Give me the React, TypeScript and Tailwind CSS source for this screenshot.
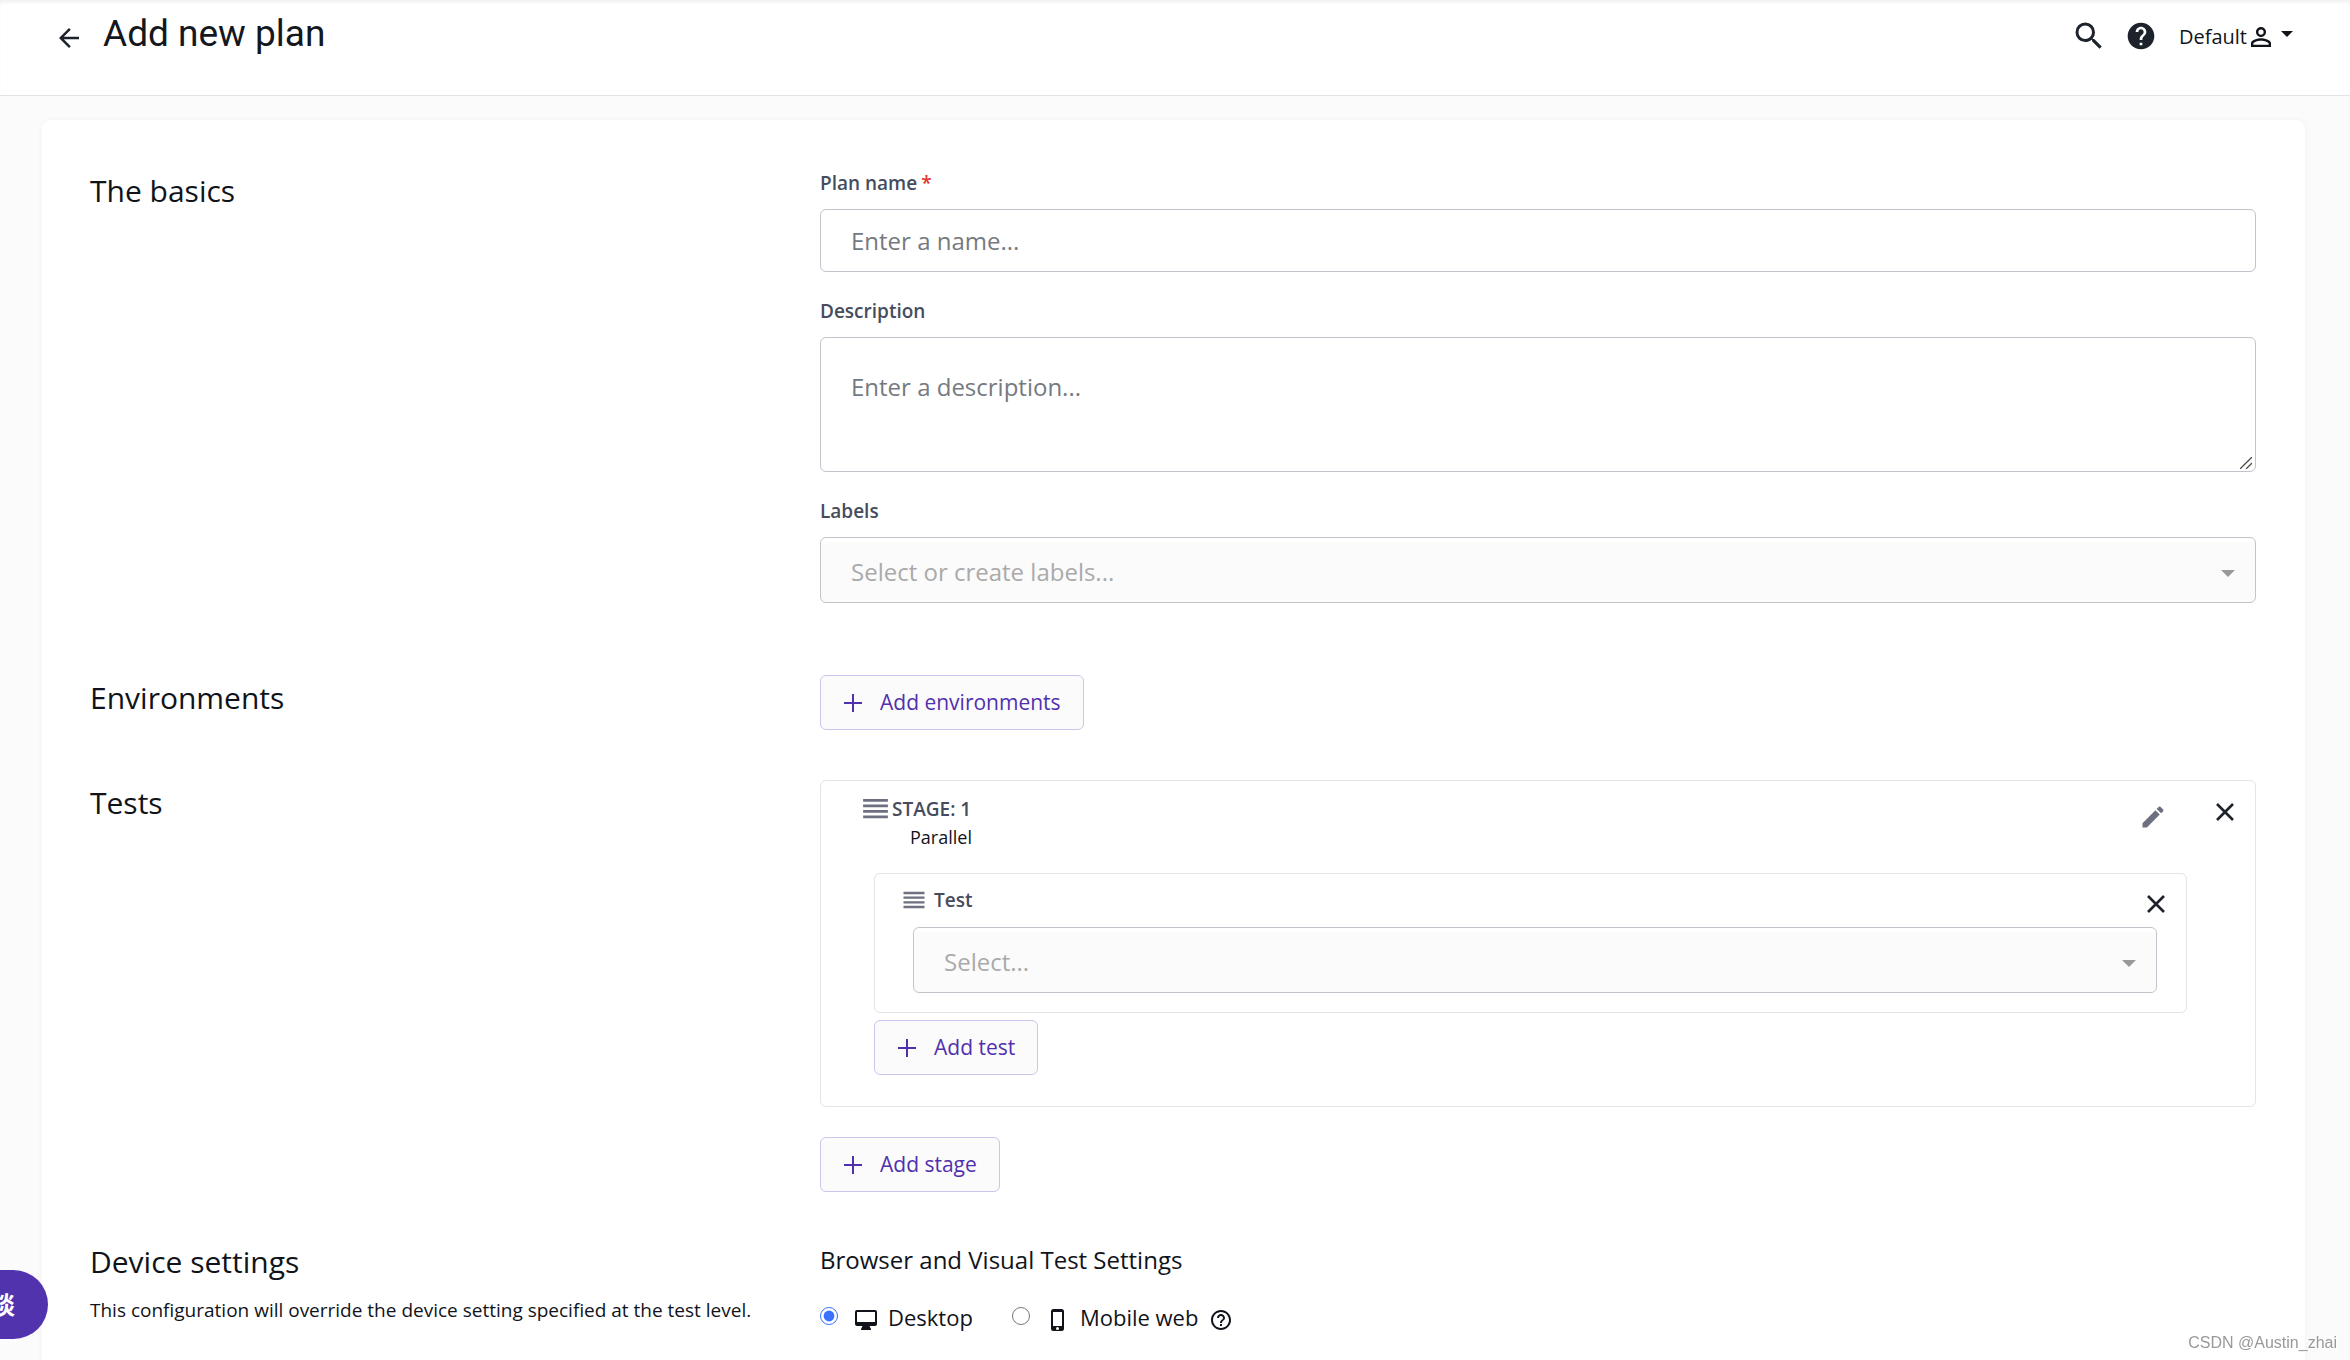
import { useState } from "react";
import type { ReactNode } from "react";
import {
  MdArrowBack,
  MdEdit,
  MdHelp,
  MdHelpOutline,
  MdPersonOutline,
  MdReorder,
  MdSearch,
} from "react-icons/md";

const labelClass = "block text-[19px] leading-7 font-semibold text-[#464c5e]";

function PlusIcon() {
  return (
    <svg viewBox="0 0 18 18" className="h-[18px] w-[18px]" fill="none" stroke="currentColor" strokeWidth="2" aria-hidden="true">
      <path d="M9 0v18M0 9h18" />
    </svg>
  );
}

function DesktopIcon() {
  return (
    <svg viewBox="0 0 24 24" className="mt-1.5 h-6 w-6 fill-current" aria-hidden="true">
      <path
        fillRule="evenodd"
        d="M3 2h18a2 2 0 0 1 2 2v12a2 2 0 0 1-2 2h-5.500l1.500 3v1H7v-1l1.500-3H3a2 2 0 0 1-2-2V4a2 2 0 0 1 2-2zm0 2v10h18V4z"
      />
    </svg>
  );
}

function PhoneIcon() {
  return (
    <svg viewBox="0 0 24 24" className="mt-1.5 h-6 w-6 fill-current" aria-hidden="true">
      <path
        fillRule="evenodd"
        d="M7.500 1h8A2.500 2.500 0 0 1 18 3.500v17a2.500 2.500 0 0 1-2.500 2.500h-8A2.500 2.500 0 0 1 5 20.500v-17A2.500 2.500 0 0 1 7.500 1zM7 4v14h9V4zm4.500 15a1.500 1.500 0 1 0 0 3 1.500 1.500 0 0 0 0-3z"
      />
    </svg>
  );
}

function CloseButton({ label }: { label: string }) {
  return (
    <button type="button" aria-label={label} className="text-[#1d222b]">
      <svg viewBox="0 0 18 18" className="h-[18px] w-[18px]" fill="none" stroke="currentColor" strokeWidth="2.6" aria-hidden="true">
        <path d="M1 1l16 16M17 1L1 17" />
      </svg>
    </button>
  );
}

function AddButton({ children }: { children: ReactNode }) {
  return (
    <button
      type="button"
      className="flex h-[55px] items-center gap-[18px] rounded-md border border-[#cdc5ec] bg-[#fbfbfb] pr-[22px] pl-[23px] text-[21px] text-[#5130ae]"
    >
      <PlusIcon />
      {children}
    </button>
  );
}

function SelectBox({ id, placeholder }: { id: string; placeholder: string }) {
  return (
    <div className="relative">
      <select
        id={id}
        defaultValue=""
        className="h-[66px] w-full appearance-none rounded-md border border-[#c3c3cc] bg-[#fbfbfb] px-[30px] pt-1 text-2xl text-[#aaaaaa] shadow-[inset_0_4px_0_#ffffff]"
      >
        <option value="">{placeholder}</option>
      </select>
      <svg viewBox="0 0 14 7" className="pointer-events-none absolute top-[33px] right-[21px] h-[7px] w-[14px] fill-[#999999]" aria-hidden="true">
        <path d="M0 0h14L7 7z" />
      </svg>
    </div>
  );
}

function Section({ title, note, children }: { title: string; note?: string; children: ReactNode }) {
  return (
    <section className="grid grid-cols-12 gap-x-6">
      <div className="col-span-4 pt-[3px]">
        <h2 className="text-3xl leading-10 text-[#10141a]">{title}</h2>
        {note && <p className="mt-[14px] text-[19px] leading-7 whitespace-nowrap">{note}</p>}
      </div>
      <div className="col-span-8">{children}</div>
    </section>
  );
}

function Header() {
  return (
    <header className="flex h-24 items-start justify-between border-b border-[#e3e4e6] bg-white pr-[57px] pl-[54px] shadow-[inset_0_4px_4px_-2px_#eeeeee]">
      <div className="flex h-[72px] items-center gap-[19px]">
        <button type="button" aria-label="Back" className="pt-1 text-[#1d222b]">
          <MdArrowBack className="h-[30px] w-[30px]" />
        </button>
        <h1 className="pb-1 font-['Roboto',sans-serif] text-[37px] leading-[68px] text-[#14171d]">Add new plan</h1>
      </div>
      <div className="flex h-[72px] items-center text-[#1d222b]">
        <button type="button" aria-label="Search">
          <MdSearch className="h-9 w-9" />
        </button>
        <button type="button" aria-label="Help" className="ml-[18px]">
          <MdHelp className="h-8 w-8" />
        </button>
        <button type="button" className="ml-[22px] flex items-center pt-0.5 text-[20px] text-[#10141a]">
          Default
          <MdPersonOutline className="-ml-px h-[30px] w-[30px]" />
          <svg viewBox="0 0 12 6" className="mb-1.5 ml-[5px] h-[6px] w-3 fill-current" aria-hidden="true">
            <path d="M0 0h12L6 6z" />
          </svg>
        </button>
      </div>
    </header>
  );
}

function TestCard() {
  return (
    <div className="rounded-md border border-[#e3e3e8] pt-3 pr-[29px] pb-[19px] pl-[25px]">
      <div className="flex h-[41px] items-start justify-between">
        <div className="flex items-center gap-[6px]">
          <MdReorder className="h-7 w-7 text-[#6c7080]" />
          <label htmlFor="test" className={labelClass}>
            Test
          </label>
        </div>
        <div className="-mr-2 pt-[9px]">
          <CloseButton label="Remove test" />
        </div>
      </div>
      <div className="pl-[13px]">
        <SelectBox id="test" placeholder="Select..." />
      </div>
    </div>
  );
}

function StageCard() {
  return (
    <div className="rounded-md border border-[#e3e3e8] pb-[31px]">
      <div className="flex h-[92px] justify-between pt-[11px] pr-[21px] pl-[38px]">
        <div>
          <div className="flex items-center">
            <MdReorder className="h-[33px] w-[33px] text-[#6c7080]" />
            <span className={labelClass}>STAGE: 1</span>
          </div>
          <p className="pl-[51px] text-lg leading-6">Parallel</p>
        </div>
        <div className="flex items-start gap-[49px] pt-[11px]">
          <button type="button" aria-label="Edit stage" className="text-[#6c7080]">
            <MdEdit className="h-7 w-7" />
          </button>
          <CloseButton label="Remove stage" />
        </div>
      </div>
      <div className="pr-[68px] pl-[53px]">
        <TestCard />
        <div className="mt-[7px] flex">
          <AddButton>Add test</AddButton>
        </div>
      </div>
    </div>
  );
}

function DeviceSettings() {
  const [device, setDevice] = useState("desktop");

  return (
    <fieldset className="pt-[5px]">
      <legend className="float-left w-full text-2xl leading-8">Browser and Visual Test Settings</legend>
      <div className="clear-both flex items-center pt-[25px] text-[22px] leading-8">
        <input
          id="desktop"
          type="radio"
          name="device"
          checked={device === "desktop"}
          onChange={() => setDevice("desktop")}
          className="mb-[3px] h-[18px] w-[18px] accent-[#3b71fe]"
        />
        <label htmlFor="desktop" className="ml-4 flex items-center gap-[10px]">
          <DesktopIcon />
          Desktop
        </label>
        <input
          id="mobile"
          type="radio"
          name="device"
          checked={device === "mobile"}
          onChange={() => setDevice("mobile")}
          className="mb-[3px] ml-[39px] h-[18px] w-[18px] accent-[#3b71fe]"
        />
        <label htmlFor="mobile" className="ml-4 flex items-center gap-[10px]">
          <PhoneIcon />
          Mobile web
        </label>
        <button type="button" aria-label="About mobile web" className="ml-[11px] pt-1.5">
          <MdHelpOutline className="h-6 w-6" />
        </button>
      </div>
    </fieldset>
  );
}

export default function App() {
  return (
    <div className="flex min-h-screen flex-col overflow-x-hidden bg-[#fbfbfb] font-['Open_Sans','Noto_Sans_CJK_SC',sans-serif] text-[#10141a]">
      <Header />
      <main className="flex flex-1 flex-col pt-6 pr-[45px] pl-[42px]">
        <form className="flex-1 rounded-t-[9px] bg-white pt-12 pr-[49px] pl-12 shadow-[0_0_5px_#f1f1f1]">
          <Section title="The basics">
            <label htmlFor="plan-name" className={labelClass + " pt-px"}>
              Plan name<span className="ml-1 text-[#e0362c]">*</span>
            </label>
            <input
              id="plan-name"
              type="text"
              required
              placeholder="Enter a name..."
              className="mt-3 block h-[63px] w-full rounded-md border border-[#c3c3cc] px-[30px] text-2xl placeholder:text-[#757a80]"
            />
            <label htmlFor="description" className={labelClass + " mt-[25px]"}>
              Description
            </label>
            <div className="relative mt-3">
              <textarea
                id="description"
                placeholder="Enter a description..."
                className="block h-[135px] w-full resize-y rounded-md border border-[#c3c3cc] px-[30px] py-[33px] text-2xl placeholder:text-[#757a80] [&::-webkit-resizer]:hidden"
              />
              <svg
                viewBox="0 0 12 12"
                className="pointer-events-none absolute right-1 bottom-[3px] h-3 w-3"
                fill="none"
                stroke="#4a4a4a"
                strokeWidth="1.3"
                aria-hidden="true"
              >
                <path d="M0 12L12 0M6 12l6-6" />
              </svg>
            </div>
            <label htmlFor="labels" className={labelClass + " mt-[25px] mb-3"}>
              Labels
            </label>
            <SelectBox id="labels" placeholder="Select or create labels..." />
          </Section>

          <div className="mt-[72px]">
            <Section title="Environments">
              <div className="flex">
                <AddButton>Add environments</AddButton>
              </div>
            </Section>
          </div>

          <div className="mt-[50px]">
            <Section title="Tests">
              <StageCard />
              <div className="mt-[30px] flex">
                <AddButton>Add stage</AddButton>
              </div>
            </Section>
          </div>

          <div className="mt-[47px]">
            <Section
              title="Device settings"
              note="This configuration will override the device setting specified at the test level."
            >
              <DeviceSettings />
            </Section>
          </div>
        </form>
      </main>

      {/* Chat launcher, tucked behind the left edge */}
      <button
        type="button"
        className="fixed bottom-[21px] -left-12 h-[69px] w-24 rounded-full bg-[#5233ae] pr-[33px] text-right text-2xl font-bold text-white"
      >
        谈
      </button>
      <p className="fixed right-[13px] bottom-[5px] font-['Liberation_Sans',sans-serif] text-base text-[#999999] [text-shadow:1px_1px_0_#ffffff]">
        CSDN @Austin_zhai
      </p>
    </div>
  );
}
